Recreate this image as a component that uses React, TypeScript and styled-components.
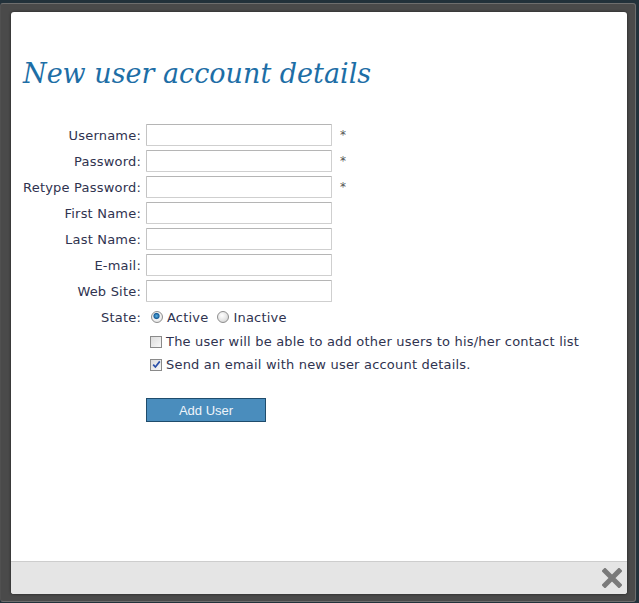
import { createGlobalStyle, styled } from 'styled-components'

const GlobalStyle = createGlobalStyle`
  html, body {
    margin: 0;
    padding: 0;
    background: #22313a;
  }
  body {
    font-family: 'DejaVu Sans', Verdana, sans-serif;
  }
`

const fields: { label: string; required?: boolean }[] = [
  { label: 'Username:', required: true },
  { label: 'Password:', required: true },
  { label: 'Retype Password:', required: true },
  { label: 'First Name:' },
  { label: 'Last Name:' },
  { label: 'E-mail:' },
  { label: 'Web Site:' },
]

export default function App() {
  return (
    <>
      <GlobalStyle />
      <Frame>
        <Panel>
          <Content>
            <Title>New user account details</Title>
            <Form>
              {fields.map((f) => (
                <Row key={f.label}>
                  <Label>{f.label}</Label>
                  <TextInput type='text' />
                  {f.required && <Required>*</Required>}
                </Row>
              ))}
              <Row>
                <Label>State:</Label>
                <Options>
                  <Option>
                    <Radio $checked />
                    Active
                  </Option>
                  <Option>
                    <Radio />
                    Inactive
                  </Option>
                </Options>
              </Row>
              <CheckRow>
                <Label />
                <Option>
                  <Check />
                  The user will be able to add other users to his/her contact list
                </Option>
              </CheckRow>
              <CheckRow>
                <Label />
                <Option>
                  <Check $checked>
                    <svg width='9' height='9' viewBox='0 0 9 9'>
                      <path d='M1.2 4.6 L3.4 7 L7.8 1.4' fill='none' stroke='#2b50a8' strokeWidth='1.7' />
                    </svg>
                  </Check>
                  Send an email with new user account details.
                </Option>
              </CheckRow>
              <ButtonRow>
                <Label />
                <SubmitButton type='button'>Add User</SubmitButton>
              </ButtonRow>
            </Form>
          </Content>
          <Footer>
            <CloseButton aria-label='Close'>
              <svg width='20' height='20' viewBox='0 0 20 20'>
                <path d='M3 3 L17 17 M17 3 L3 17' stroke='#7a7a7a' strokeWidth='5' strokeLinecap='square' />
              </svg>
            </CloseButton>
          </Footer>
        </Panel>
      </Frame>
    </>
  )
}

const Frame = styled.div`
  box-sizing: border-box;
  margin-top: 3px;
  width: 636px;
  height: 599px;
  background: #4a4a4a;
  border: 1px solid #6e6e6e;
  border-left-color: #505050;
  border-radius: 3px;
  padding: 8px 8px 7px 10px;
`

const Panel = styled.div`
  display: flex;
  flex-direction: column;
  height: 100%;
  background: #fff;
  border-radius: 3px;
  box-shadow: 0 0 3px rgba(0, 0, 0, 0.6);
  overflow: hidden;
`

const Content = styled.div`
  flex: 1;
  padding: 45px 12px 0;
`

const Title = styled.h1`
  margin: 0 0 31px;
  font-family: 'DejaVu Serif', Georgia, serif;
  font-style: italic;
  font-weight: normal;
  font-size: 27px;
  line-height: 34px;
  color: #1d6ea6;
`

const Form = styled.div`
  display: flex;
  flex-direction: column;
`

const Row = styled.div`
  display: flex;
  align-items: center;
  height: 26px;
  font-size: 13px;
  letter-spacing: 0.2px;
  color: #2f3350;
`

const CheckRow = styled(Row)`
  height: 23px;
`

const ButtonRow = styled(Row)`
  height: auto;
  margin-top: 22px;
`

const Label = styled.span`
  width: 118px;
  margin-right: 5px;
  text-align: right;
  flex-shrink: 0;
`

const TextInput = styled.input`
  box-sizing: border-box;
  width: 186px;
  height: 22px;
  margin: 0;
  border: 1px solid #cfcfcf;
  border-top-color: #b5b5b5;
  border-left-color: #c4c4c4;
  border-radius: 1px;
  background: #fff;
  padding: 2px 4px;
  font: inherit;
`

const Required = styled.span`
  margin-left: 8px;
  color: #555;
  font-size: 12px;
`

const Options = styled.div`
  display: flex;
  align-items: center;
  gap: 9px;
  padding-left: 5px;
`

const Option = styled.label`
  display: flex;
  align-items: center;
  gap: 4px;
  padding-left: 4px;
  white-space: nowrap;
  ${Options} & {
    padding-left: 0;
  }
`

const Radio = styled.span<{ $checked?: boolean }>`
  box-sizing: border-box;
  width: 12px;
  height: 12px;
  border-radius: 50%;
  border: 1px solid #8e8e8e;
  background: ${(p) =>
    p.$checked
      ? 'radial-gradient(circle at 45% 40%, #5ab4e6 0, #1a5f9a 2.6px, #f4f4f4 3.6px, #dcdcdc 100%)'
      : 'radial-gradient(circle at 40% 35%, #ffffff 0, #e2e2e2 60%, #c8c8c8 100%)'};
`

const Check = styled.span<{ $checked?: boolean }>`
  box-sizing: border-box;
  display: flex;
  align-items: center;
  justify-content: center;
  width: 12px;
  height: 12px;
  border: 1px solid #8a8a8a;
  background: linear-gradient(135deg, #dcdcdc, #f8f8f8);
`

const SubmitButton = styled.button`
  box-sizing: border-box;
  width: 120px;
  height: 24px;
  margin: 0;
  background: #4a8dbd;
  border: 1px solid #1f4c6c;
  color: #eef4fa;
  font-family: 'Liberation Sans', Arial, sans-serif;
  font-size: 13px;
  letter-spacing: 0;
  cursor: pointer;
`

const Footer = styled.div`
  display: flex;
  justify-content: flex-end;
  align-items: center;
  height: 32px;
  background: #e5e5e5;
  border-top: 1px solid #cdcdcd;
  padding-right: 5px;
`

const CloseButton = styled.span`
  display: flex;
  cursor: pointer;
`
